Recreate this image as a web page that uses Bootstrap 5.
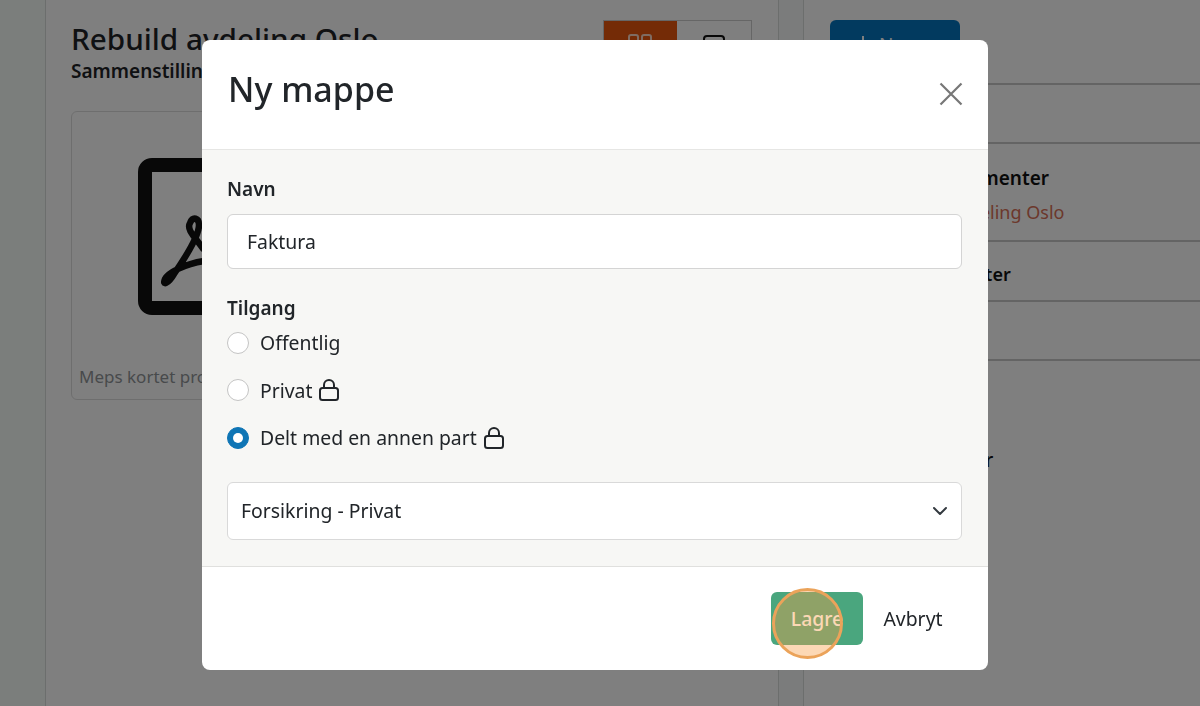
<!DOCTYPE html>
<html lang="no">
<head>
  <meta charset="UTF-8" />
  <meta name="viewport" content="width=device-width, initial-scale=1.0" />
  <title>Ny mappe</title>
  <link href="https://cdn.jsdelivr.net/npm/bootstrap@5.3.3/dist/css/bootstrap.min.css" rel="stylesheet">
  <style>
    html, body { height: 706px; overflow: hidden; }
    body { font-family: "Noto Sans", "Liberation Sans", sans-serif; font-size: 19.4px; color: #212529; background: #fff; }

    /* side bak modalen */
    .page-wrap { height: 706px; }
    .side-rail { width: 46px; background: #f7fcf9; border-right: 1px solid #d8dcda; }
    .main-area { width: 733px; padding: 20px 26px 0 25px; border-right: 1px solid #d8dcda; }
    .gap-strip { width: 25px; background: #f7f9f8; border-right: 1px solid #d8dcda; }
    .aside-area { flex: 1; padding: 20px 0 0 26px; }
    .page-title { font-size: 29.7px; font-weight: 500; line-height: 38px; margin: 0; color: #1f2326; }
    .page-sub { font-size: 19px; font-weight: 600; line-height: 26px; margin: 0; color: #1f2326; white-space: nowrap; }
    .view-toggle { width: 149px; height: 60px; border: 1px solid #ccc; }
    .view-on { width: 73px; background: #e8560c; padding: 13px 0 0 24px; }
    .view-off { padding: 14px 0 0 26px; }
    .doc-card { width: 258px; height: 289px; margin-top: 27px; border-color: #ddd; }
    .doc-thumb { height: 252px; padding: 46px 0 0 2px; }
    .doc-text { font-size: 17px; color: #909498; padding-left: 7px; white-space: nowrap; overflow: hidden; }
    .new-btn { width: 130px; height: 50px; background: #0575bf; border-radius: 6px; color: #fff; padding-left: 24px; gap: 7px; font-size: 19px; }
    .aside-list { margin-top: 13px; }
    .aside-row { border-top: 2px solid #c8c8c8; padding-left: 64px; height: 59px; }
    .aside-row.tall { height: 98px; padding-top: 20px; }
    .aside-row.mid { height: 60px; padding-top: 18px; }
    .aside-name { font-size: 19px; font-weight: 600; line-height: 28px; color: #111; white-space: nowrap; }
    .aside-name-kort { margin-left: -19px; font-size: 18px; }
    .aside-link { font-size: 18px; line-height: 40px; margin-left: -13px; color: #d87058; white-space: nowrap; }
    .aside-plain { margin-top: 28px; padding-left: 53px; font-size: 19px; font-weight: 500; color: #111; }

    /* modal */
    .modal.d-block { overflow: hidden; }
    .modal-dialog.mappe-dialog { max-width: none; width: 786px; margin: 40px 0 0 202px; }
    .mappe-dialog .modal-content { height: 630px; border: 0; border-radius: 8px; }
    .mappe-dialog .modal-header { height: 110px; padding: 0 25px 0 26px; border-color: #e6e6e4; align-items: flex-start; }
    .mappe-title { font-size: 34px; font-weight: 500; line-height: 48px; margin: 25px 0 0 0; }
    .close-x { border: 0; background: none; padding: 0; width: 24px; height: 24px; margin-top: 42px; }
    .mappe-dialog .modal-body { background: #f7f7f5; padding: 25px 26px 0 25px; height: 416px; flex: none; }
    .felt-label { font-size: 19px; font-weight: 600; line-height: 28px; margin-bottom: 11px; }
    .felt-input { height: 55px; font-size: 19.4px; padding: 0 19px; border-color: #d4d4d4; border-radius: 6px; }
    .tilgang-label { font-size: 19px; font-weight: 600; line-height: 28px; margin: 25px 0 0; }
    .valg { height: 47.5px; padding-left: 33px; margin: 0; display: flex; align-items: center; gap: 7px; }
    .valg .form-check-input { width: 22px; height: 22px; margin: 0 4px 0 -33px; flex: none; border-color: #c4c4c4; }
    .valg .form-check-input:checked { background-color: #0f75b5; border-color: #0f75b5; }
    .valg .form-check-label { white-space: nowrap; }
    .valg-list { margin-top: -3px; }
    .felt-select { height: 58px; font-size: 19.4px; padding: 0 13px; margin-top: 20px; border-color: #d9d9d9; border-radius: 6px; background-size: 20px 16px; background-position: right 11px center; }
    .mappe-dialog .modal-footer { height: 104px; padding: 0 25px 0 0; border-color: #e0e0de; align-items: flex-start; gap: 0; flex-wrap: nowrap; }
    .mappe-dialog .modal-footer > * { margin: 0; }
    .btn-lagre { width: 92px; height: 53px; margin-top: 25px; background: #4aa67e; color: #fff; font-size: 19.4px; font-weight: 500; border: 0; border-radius: 6px; padding: 0; }
    .btn-avbryt { width: 100px; height: 53px; margin-top: 25px !important; background: none; color: #212529; font-size: 19.4px; border: 0; padding: 0; }

    /* markering over Lagre-knappen */
    .lagre-wrap { position: relative; }
    .klikk-ring { position: absolute; left: 1px; top: 21px; width: 71px; height: 71px; border-radius: 50%; background: rgba(247, 158, 71, .4); border: 3px solid #eba35a; pointer-events: none; }
  </style>
</head>
<body>

  <!-- Siden bak modalen -->
  <div class="page-wrap d-flex">
    <div class="side-rail"></div>
    <div class="main-area">
      <div class="d-flex justify-content-between align-items-start">
        <div>
          <h1 class="page-title">Rebuild avdeling Oslo</h1>
          <p class="page-sub">Sammenstilling av dokumenter</p>
        </div>
        <div class="view-toggle d-flex">
          <div class="view-on">
            <svg class="d-block" width="24" height="24" viewBox="0 0 24 24"><rect x="1" y="1" width="9" height="9" rx="2" fill="none" stroke="#ffd9c4" stroke-width="2"/><rect x="14" y="1" width="9" height="9" rx="2" fill="none" stroke="#ffd9c4" stroke-width="2"/></svg>
          </div>
          <div class="view-off">
            <svg class="d-block" width="22" height="22" viewBox="0 0 22 22"><rect x="1" y="1" width="20" height="20" rx="3" fill="none" stroke="#111" stroke-width="2"/><path d="M1 7h20M8 7v14" fill="none" stroke="#111" stroke-width="2"/></svg>
          </div>
        </div>
      </div>
      <div class="card doc-card">
        <div class="doc-thumb d-flex justify-content-center">
          <svg class="d-block" width="126" height="157" viewBox="0 0 126 157">
            <rect x="7" y="7" width="112" height="143" rx="7" fill="none" stroke="#111" stroke-width="14"/>
            <path d="M66 92C58 80 48 72 52 65C55 58 61 60 61 67C61 78 47 100 36 116C30 126 24 128 27 121C30 115 46 106 66 103L90 101" fill="none" stroke="#111" stroke-width="6.5"/>
          </svg>
        </div>
        <div class="doc-text">Meps kortet problemer</div>
      </div>
    </div>
    <div class="gap-strip"></div>
    <div class="aside-area">
      <div class="new-btn d-flex align-items-center">
        <svg class="d-block" width="18" height="18" viewBox="0 0 18 18"><path d="M9 0v18M0 9h18" stroke="#fff" stroke-width="2"/></svg>
        <span>Ny</span>
      </div>
      <div class="aside-list">
        <div class="aside-row"></div>
        <div class="aside-row tall">
          <div class="aside-name">Alle dokumenter</div>
          <div class="aside-link">Rebuild avdeling Oslo</div>
        </div>
        <div class="aside-row mid"><div class="aside-name aside-name-kort">Mine kontakter</div></div>
        <div class="aside-row"></div>
        <div class="aside-row p-0"></div>
      </div>
      <div class="aside-plain">Innstillinger</div>
    </div>
  </div>

  <div class="modal-backdrop show"></div>

  <!-- Modal: Ny mappe -->
  <div class="modal d-block" tabindex="-1">
    <div class="modal-dialog mappe-dialog">
      <div class="modal-content">
        <div class="modal-header">
          <h2 class="mappe-title">Ny mappe</h2>
          <button type="button" class="close-x ms-auto" aria-label="Lukk">
            <svg class="d-block" width="24" height="24" viewBox="0 0 24 24"><path d="M1.5 1.5l21 21M22.5 1.5l-21 21" stroke="#777" stroke-width="2.2" fill="none"/></svg>
          </button>
        </div>
        <div class="modal-body">
          <label class="form-label felt-label d-block" for="navn">Navn</label>
          <input id="navn" class="form-control felt-input" type="text" value="Faktura">
          <div class="tilgang-label">Tilgang</div>
          <div class="valg-list">
            <div class="form-check valg">
              <input class="form-check-input" type="radio" name="tilgang" id="t1">
              <label class="form-check-label" for="t1">Offentlig</label>
            </div>
            <div class="form-check valg">
              <input class="form-check-input" type="radio" name="tilgang" id="t2">
              <label class="form-check-label" for="t2">Privat</label>
              <svg class="d-block" width="20" height="22" viewBox="0 0 20 22"><rect x="1" y="9" width="18" height="12" rx="2.5" fill="none" stroke="#212529" stroke-width="2"/><path d="M5 9V6a5 5 0 0 1 10 0v3" fill="none" stroke="#212529" stroke-width="2"/></svg>
            </div>
            <div class="form-check valg">
              <input class="form-check-input" type="radio" name="tilgang" id="t3" checked>
              <label class="form-check-label" for="t3">Delt med en annen part</label>
              <svg class="d-block" width="20" height="22" viewBox="0 0 20 22"><rect x="1" y="9" width="18" height="12" rx="2.5" fill="none" stroke="#212529" stroke-width="2"/><path d="M5 9V6a5 5 0 0 1 10 0v3" fill="none" stroke="#212529" stroke-width="2"/></svg>
            </div>
          </div>
          <select class="form-select felt-select">
            <option>Forsikring - Privat</option>
          </select>
        </div>
        <div class="modal-footer">
          <div class="lagre-wrap">
            <button type="button" class="btn btn-lagre">Lagre</button>
            <div class="klikk-ring"></div>
          </div>
          <button type="button" class="btn btn-avbryt">Avbryt</button>
        </div>
      </div>
    </div>
  </div>

  <script src="https://cdn.jsdelivr.net/npm/bootstrap@5.3.3/dist/js/bootstrap.bundle.min.js"></script>
</body>
</html>
